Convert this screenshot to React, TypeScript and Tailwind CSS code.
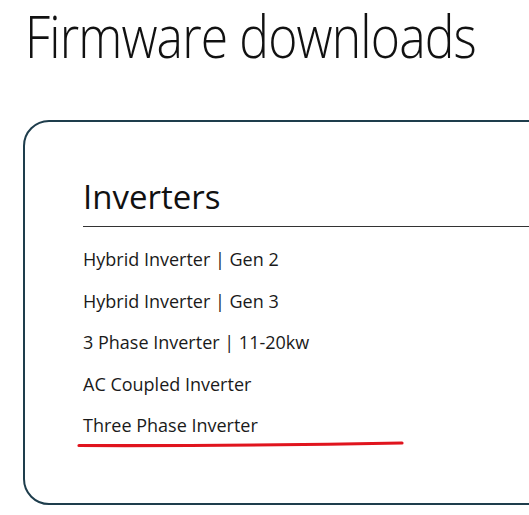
import React from "react";

const items = [
  "Hybrid Inverter | Gen 2",
  "Hybrid Inverter | Gen 3",
  "3 Phase Inverter | 11-20kw",
  "AC Coupled Inverter",
  "Three Phase Inverter",
];

export default function App() {
  return (
    <div className="w-[529px] h-[515px] overflow-hidden bg-white relative" style={{ fontFamily: '"Open Sans", sans-serif' }}>
      <div className="pl-[25px] h-[70px]">
        <h1 className="inline-block text-[59px] leading-[70px] font-light text-[#111] tracking-[-1px] whitespace-nowrap origin-left scale-x-[0.845]">
          Firmware downloads
        </h1>
      </div>
      <div className="ml-[23px] mt-[50px] w-[540px] h-[385px] border-2 border-[#1e3d4c] rounded-[26px] pl-[58px] pt-[53px] relative">
        <h2 className="text-[33px] leading-[44px] text-[#111] font-normal">Inverters</h2>
        <div className="mt-[7px] border-t border-[#333]" />
        <ul className="mt-[12px] flex flex-col">
          {items.map((t) => (
            <li key={t} className="text-[18px] leading-[41.5px] text-[#1a1a1a]">
              {t}
            </li>
          ))}
        </ul>
      </div>
      <svg className="absolute left-0 top-0 pointer-events-none" width="529" height="515">
        <path d="M79 445.5 Q 240 446 402 443" stroke="#e0141e" strokeWidth="3.2" strokeLinecap="round" fill="none" />
      </svg>
    </div>
  );
}
